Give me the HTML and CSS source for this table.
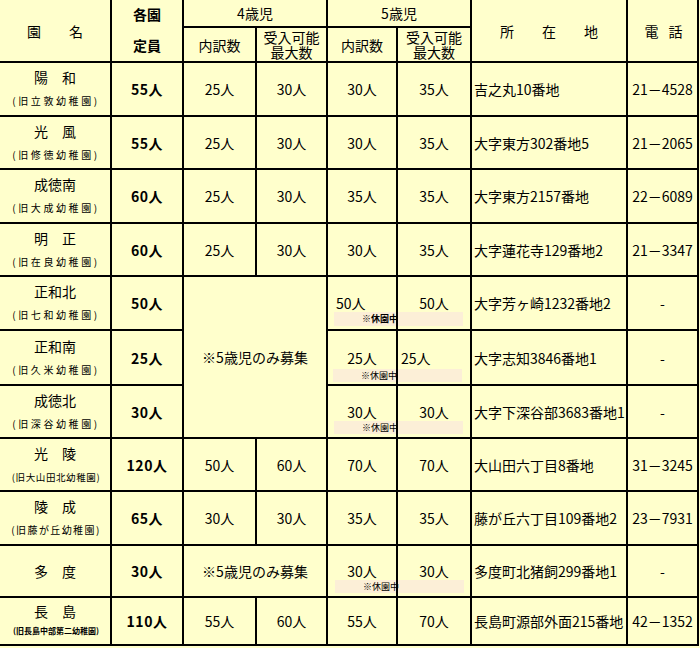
FILE: index.html
```html
<!DOCTYPE html>
<html lang="ja">
<head>
<meta charset="utf-8">
<title>幼稚園一覧</title>
<link rel="stylesheet" href="styles.css">
</head>
<body>
<div class="wrap">
<table class="kinder">
  <colgroup>
    <col class="c-name"><col class="c-cap"><col class="c-n"><col class="c-m"><col class="c-n2"><col class="c-m2"><col class="c-addr"><col class="c-tel">
  </colgroup>
  <thead>
    <tr class="ha">
      <th rowspan="2" class="first top">園　　名</th>
      <th rowspan="2" class="top cap-h"><span class="hl">各園</span><span class="hl">定員</span></th>
      <th colspan="2" class="top">4歳児</th>
      <th colspan="2" class="top">5歳児</th>
      <th rowspan="2" class="top">所　　在　　地</th>
      <th rowspan="2" class="top tel-h">電　話</th>
    </tr>
    <tr class="hb">
      <th>内訳数</th>
      <th class="two">受入可能<br>最大数</th>
      <th>内訳数</th>
      <th class="two">受入可能<br>最大数</th>
    </tr>
  </thead>
  <tbody>
    <tr class="r1">
      <td class="first"><span class="nm">陽　和</span><span class="sub">(旧立敦幼稚園)</span></td>
      <td class="cap">55人</td><td>25人</td><td>30人</td><td>30人</td><td>35人</td>
      <td class="addr">吉之丸10番地</td><td>21－4528</td>
    </tr>
    <tr class="r2">
      <td class="first"><span class="nm">光　風</span><span class="sub">(旧修徳幼稚園)</span></td>
      <td class="cap">55人</td><td>25人</td><td>30人</td><td>30人</td><td>35人</td>
      <td class="addr">大字東方302番地5</td><td>21－2065</td>
    </tr>
    <tr class="r3">
      <td class="first"><span class="nm">成徳南</span><span class="sub">(旧大成幼稚園)</span></td>
      <td class="cap">60人</td><td>25人</td><td>30人</td><td>35人</td><td>35人</td>
      <td class="addr">大字東方2157番地</td><td>22－6089</td>
    </tr>
    <tr class="r4">
      <td class="first"><span class="nm">明　正</span><span class="sub">(旧在良幼稚園)</span></td>
      <td class="cap">60人</td><td>25人</td><td>30人</td><td>30人</td><td>35人</td>
      <td class="addr">大字蓮花寺129番地2</td><td>21－3347</td>
    </tr>
    <tr class="r5">
      <td class="first"><span class="nm">正和北</span><span class="sub">(旧七和幼稚園)</span></td>
      <td class="cap">50人</td>
      <td rowspan="3" colspan="2">※5歳児のみ募集</td>
      <td class="left">50人</td><td>50人</td>
      <td class="addr">大字芳ヶ崎1232番地2</td><td>-</td>
    </tr>
    <tr class="r6">
      <td class="first"><span class="nm">正和南</span><span class="sub">(旧久米幼稚園)</span></td>
      <td class="cap">25人</td>
      <td>25人</td><td class="left left2">25人</td>
      <td class="addr">大字志知3846番地1</td><td>-</td>
    </tr>
    <tr class="r7">
      <td class="first"><span class="nm">成徳北</span><span class="sub">(旧深谷幼稚園)</span></td>
      <td class="cap">30人</td>
      <td>30人</td><td>30人</td>
      <td class="addr">大字下深谷部3683番地1</td><td>-</td>
    </tr>
    <tr class="r8">
      <td class="first"><span class="nm">光　陵</span><span class="sub sub-s">(旧大山田北幼稚園)</span></td>
      <td class="cap">120人</td><td>50人</td><td>60人</td><td>70人</td><td>70人</td>
      <td class="addr">大山田六丁目8番地</td><td>31－3245</td>
    </tr>
    <tr class="r9">
      <td class="first"><span class="nm">陵　成</span><span class="sub sub-m">(旧藤が丘幼稚園)</span></td>
      <td class="cap">65人</td><td>30人</td><td>30人</td><td>35人</td><td>35人</td>
      <td class="addr">藤が丘六丁目109番地2</td><td>23－7931</td>
    </tr>
    <tr class="r10">
      <td class="first"><span class="nm only">多　度</span></td>
      <td class="cap">30人</td>
      <td colspan="2">※5歳児のみ募集</td>
      <td>30人</td><td>30人</td>
      <td class="addr">多度町北猪飼299番地1</td><td>-</td>
    </tr>
    <tr class="r11">
      <td class="first"><span class="nm nm11">長　島</span><span class="sub sub-xs">(旧長島中部第二幼稚園)</span></td>
      <td class="cap">110人</td><td>55人</td><td>60人</td><td>55人</td><td>70人</td>
      <td class="addr">長島町源部外面215番地</td><td>42－1352</td>
    </tr>
  </tbody>
</table>
<div class="note n1">※休園中</div>
<div class="note n2">※休園中</div>
<div class="note n3">※休園中</div>
<div class="note n4">※休園中</div>
</div>
</body>
</html>
```

FILE: styles.css
```css
html {
  background: #ffffcc;
}
body {
  margin: 0;
  font-family: "Noto Sans CJK JP", "Noto Sans", sans-serif;
  color: #000;
}
.wrap {
  position: relative;
  width: 700px;
  height: 648px;
}
.kinder {
  border-collapse: collapse;
  table-layout: fixed;
  width: 698px;
  font-size: 14px;
}
.c-name { width: 111px; }
.c-cap { width: 72px; }
.c-n { width: 73px; }
.c-m { width: 71px; }
.c-n2 { width: 70px; }
.c-m2 { width: 74px; }
.c-addr { width: 156px; }
.c-tel { width: 71px; }

.kinder th,
.kinder td {
  border: 2px solid #000;
  padding: 0;
  text-align: center;
  vertical-align: middle;
  font-weight: normal;
  line-height: 16px;
  white-space: nowrap;
  overflow: hidden;
}
.kinder .first { border-left: none; }
.kinder .top { border-top: none; }

.ha { height: 27px; }
.hb { height: 35px; }
.kinder .cap-h { font-weight: bold; padding-bottom: 2px; }
.hl { display: block; line-height: 16px; }
.hl + .hl { margin-top: 15px; }
.kinder .two { line-height: 15px; }
.kinder .tel-h { letter-spacing: -2px; }

.r1 { height: 54px; }
.r2 { height: 53px; }
.r3 { height: 54px; }
.r4 { height: 53px; }
.r5 { height: 54px; }
.r6 { height: 55px; }
.r7 { height: 53px; }
.r8 { height: 53px; }
.r9 { height: 54px; }
.r10 { height: 52px; }
.r11 { height: 48px; }

.nm {
  display: block;
  line-height: 16px;
  margin-bottom: 8px;
}
.nm.only { margin-bottom: 0; }
.nm.nm11 { margin-bottom: 4px; }
.sub {
  display: block;
  font-size: 10px;
  line-height: 16px;
  letter-spacing: 2.6px;
  padding-left: 2px;
}
.sub.sub-s { letter-spacing: 0.6px; font-size: 9.5px; }
.sub.sub-m { letter-spacing: 1.4px; }
.sub.sub-xs { letter-spacing: 0; font-size: 8px; font-weight: bold; }

.kinder .cap { font-weight: bold; letter-spacing: 0.5px; }
.kinder .addr { text-align: left; padding-left: 2px; }
.kinder .left { text-align: left; padding-left: 8px; }
.kinder .left2 { padding-left: 3px; }

.note {
  position: absolute;
  z-index: -1;
  width: 129px;
  height: 14px;
  background: #fcefd7;
  font-size: 9px;
  line-height: 14px;
  padding-left: 28px;
  box-sizing: border-box;
}
.n1 { left: 334px; top: 312px; font-weight: bold; }
.n2 { left: 333px; top: 369px; height: 13px; line-height: 13px; }
.n3 { left: 334px; top: 421px; height: 13px; line-height: 13px; }
.n4 { left: 335px; top: 580px; height: 13px; line-height: 13px; }
```
